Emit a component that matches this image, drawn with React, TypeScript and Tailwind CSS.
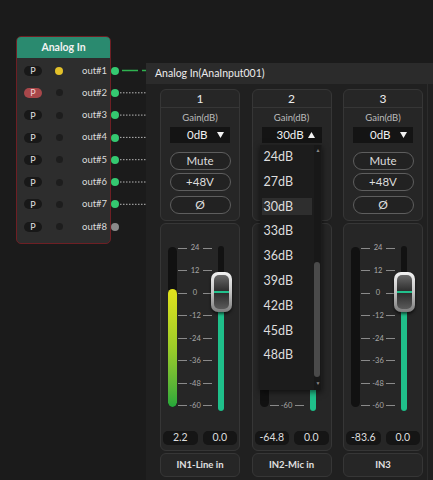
import React from 'react';

const outs = ['out#1', 'out#2', 'out#3', 'out#4', 'out#5', 'out#6', 'out#7', 'out#8'];
const scale = ['24', '12', '0', '-12', '-24', '-36', '-48', '-60'];
const gainOptions = ['24dB', '27dB', '30dB', '33dB', '36dB', '39dB', '42dB', '45dB', '48dB'];

const channels = [
  { num: '1', gain: '0dB', level: 118, peak: '2.2', out: '0.0', name: 'IN1-Line in', open: false },
  { num: '2', gain: '30dB', level: 0, peak: '-64.8', out: '0.0', name: 'IN2-Mic in', open: true },
  { num: '3', gain: '0dB', level: 0, peak: '-83.6', out: '0.0', name: 'IN3', open: false },
];

function NodeRow({ label, i }: { label: string; i: number }) {
  return (
    <div className="relative flex h-[22.3px] items-center pl-[7px]">
      <div
        className={`flex h-[10px] w-[18px] items-center justify-center rounded-full text-[9px] leading-none ${
          i === 1 ? 'bg-[#a8474a] text-[#f0d0d0]' : 'bg-[#181818] text-[#e0e0e0]'
        }`}
      >
        P
      </div>
      <div className="ml-[13px] flex w-[8px] justify-center">
        {i === 0 ? (
          <div className="h-[8px] w-[8px] rounded-full bg-[#e3c12a]" />
        ) : (
          <div className="h-[7px] w-[7px] rounded-full bg-[#1d1d1d]" />
        )}
      </div>
      <span className="ml-[19px] text-[9.5px] text-[#dcdcdc]">{label}</span>
      <div
        className={`absolute left-[94px] h-[8px] w-[8px] rounded-full ${
          i === 7 ? 'bg-[#8a8a8a]' : 'bg-[#35c870]'
        }`}
      />
    </div>
  );
}

function Connections() {
  const ys = [70.5, 92.8, 115.1, 137.4, 159.7, 182, 204.3];
  return (
    <svg className="absolute left-[118px] top-[60px]" width="30" height="160">
      {ys.map((y, i) =>
        i === 0 ? (
          <g key={i}>
            <line x1="4" y1={y - 60} x2="20" y2={y - 60} stroke="#2fb350" strokeWidth="1.5" />
            <line x1="24" y1={y - 60} x2="30" y2={y - 60} stroke="#2fb350" strokeWidth="1.5" />
          </g>
        ) : (
          <line
            key={i}
            x1="2"
            y1={y - 60}
            x2="30"
            y2={y - 60}
            stroke="#b8b8b8"
            strokeWidth="1"
            strokeDasharray="1.5 1.5"
          />
        )
      )}
    </svg>
  );
}

function Caret({ up }: { up?: boolean }) {
  return (
    <svg width="7" height="6" viewBox="0 0 7 6">
      <path d={up ? 'M0 6 L3.5 0 L7 6 Z' : 'M0 0 L7 0 L3.5 6 Z'} fill="#f2f2f2" />
    </svg>
  );
}

function Knob() {
  return (
    <div className="absolute left-[-7.5px] top-[26px] h-[40px] w-[21px] rounded-[7px] bg-gradient-to-b from-[#f2f2f2] via-[#c4c4c4] to-[#7c7c7c] p-[3px] shadow-[0_2px_3px_rgba(0,0,0,0.6)]">
      <div className="flex h-full w-full items-center rounded-[5px] bg-gradient-to-b from-[#6a6a6a] via-[#2b2b2b] to-[#5a5a5a]">
        <div className="h-[1.5px] w-full bg-[#22c08c]" />
      </div>
    </div>
  );
}

// covered: the gain list lies over the upper part of this strip
function Meter({ level, covered }: { level: number; covered: boolean }) {
  return (
    <div className="flex h-[166px] items-start">
      <div className="ml-[7px] mt-[1px] flex h-[160px] w-[9px] flex-col justify-end overflow-hidden rounded-full bg-[#111111]">
        {level > 0 && (
          <div
            className="w-full rounded-full bg-gradient-to-b from-[#e2e21c] via-[#9bcc28] to-[#22a83a]"
            style={{ height: level }}
          />
        )}
      </div>
      <div className="-mt-[3px] flex h-[168px] w-[40px] flex-col justify-between">
        {scale.map((s) => (
          <div
            key={s}
            className={`flex h-[10px] items-center pl-[1px] pr-[5px] ${covered && s !== '-60' ? 'invisible' : ''}`}
          >
            <div className="h-[1px] w-[9px] bg-[#8a8a8a]" />
            <span className="flex-1 text-center text-[7.5px] leading-none text-[#a8a8a8]">{s}</span>
            <div className="h-[1px] w-[9px] bg-[#8a8a8a]" />
          </div>
        ))}
      </div>
      <div className="relative ml-[1px] flex h-[165px] w-[6px] flex-col justify-end rounded-full bg-[#121212]">
        <div className="h-[112px] w-full rounded-full bg-[#1fbf8a]" />
        {!covered && <Knob />}
      </div>
    </div>
  );
}

function GainList() {
  return (
    <div className="absolute left-[8px] top-[56px] z-10 h-[245px] w-[62px] bg-[#1c1c1c] shadow-[0_2px_6px_rgba(0,0,0,0.6)]">
      <div className="flex flex-col pl-[2px]">
        {gainOptions.map((g) => (
          <div key={g} className="flex h-[24.8px] items-center">
            <div
              className={`flex h-[17px] w-[50px] items-center pl-[2px] text-[12.5px] text-[#dedede] ${
                g === '30dB' ? 'bg-[#2e2e2e]' : ''
              }`}
            >
              {g}
            </div>
          </div>
        ))}
      </div>
      <div className="absolute bottom-0 right-[1px] top-0 w-[7px] bg-[#181818]">
        <div className="absolute left-[2px] top-[3px] text-[5px] leading-none text-[#888]">▲</div>
        <div className="absolute left-[0.5px] top-[117px] h-[115px] w-[6px] rounded-full bg-[#4a4a4a]" />
        <div className="absolute bottom-[4px] left-[2px] text-[5px] leading-none text-[#888]">▼</div>
      </div>
    </div>
  );
}

function Strip({ ch }: { ch: (typeof channels)[number] }) {
  const btn = `h-[18px] w-[61px] rounded-full border border-[#5e5e5e] bg-[#222222] leading-none text-[#dddddd] ${
    ch.open ? 'invisible' : ''
  }`;
  return (
    <div className="relative flex w-[80px] shrink-0 flex-col gap-[2px]">
      <div className="rounded-[6px] border border-[#363636] bg-[#262626]">
        <div className="flex h-[18px] items-center justify-center border-b border-[#363636] text-[12px] text-[#ececec]">
          {ch.num}
        </div>
        <div className="flex h-[112px] flex-col items-center pt-[3px]">
          <div className="text-[9.5px] leading-[14px] text-[#bdbdbd]">Gain(dB)</div>
          <div className="mt-[2px] flex h-[16px] w-[60px] items-center bg-[#141414] text-[11.5px] text-[#f0f0f0]">
            {ch.open ? (
              <>
                <span className="pl-[15px]">{ch.gain}</span>
                <span className="ml-[4px] flex">
                  <Caret up />
                </span>
              </>
            ) : (
              <>
                <span className="pl-[17px]">{ch.gain}</span>
                <span className="ml-auto mr-[6px] flex">
                  <Caret />
                </span>
              </>
            )}
          </div>
          <button className={`mt-[9px] text-[11.5px] ${btn}`}>Mute</button>
          <button className={`mt-[3px] text-[11.5px] ${btn}`}>+48V</button>
          <button className={`mt-[5px] text-[12px] ${btn}`}>Ø</button>
        </div>
      </div>
      <div className="rounded-[6px] border border-[#363636] bg-[#262626] pb-[5px] pt-[22px]">
        <Meter level={ch.level} covered={ch.open} />
        <div className="mt-[19px] flex gap-[5px] px-[2px]">
          <div className="flex h-[14px] w-[35px] items-center justify-center rounded-[5px] bg-[#151515] text-[10.5px] text-[#dddddd]">
            {ch.peak}
          </div>
          <div className="flex h-[14px] w-[35px] items-center justify-center rounded-[5px] bg-[#151515] text-[10.5px] text-[#dddddd]">
            {ch.out}
          </div>
        </div>
      </div>
      <div className="flex h-[24px] items-center justify-center rounded-[6px] border border-[#363636] bg-[#262626] text-[9.5px] font-bold text-[#e0e0e0]">
        {ch.name}
      </div>
      {ch.open && <GainList />}
    </div>
  );
}

export default function App() {
  return (
    <div className="relative h-[480px] w-[433px] overflow-hidden bg-[#1b1b1b] font-['Lato','Noto_Sans',sans-serif]">
      {/* node on canvas */}
      <div className="absolute left-[16px] top-[36px] h-[208px] w-[95px] rounded-[5px] border border-[#6e1f24] bg-[#2d2d2d]">
        <div className="flex h-[21px] items-center justify-center rounded-t-[4px] bg-[#2a8a6f] text-[10.5px] font-bold text-[#f2f2f2]">
          Analog In
        </div>
        <div className="pt-[1.5px]">
          {outs.map((o, i) => (
            <NodeRow key={o} label={o} i={i} />
          ))}
        </div>
      </div>
      <Connections />

      {/* properties panel */}
      <div className="absolute bottom-0 left-[146px] right-0 top-[63px] bg-[#202020]">
        <div className="flex h-[21px] items-center bg-[#2b2b2b] pl-[9px] text-[10.5px] text-[#ececec]">
          Analog In(AnaInput001)
        </div>
        <div className="flex gap-[11.5px] pl-[14px] pt-[5px]">
          {channels.map((ch) => (
            <Strip key={ch.num} ch={ch} />
          ))}
        </div>
        <div className="absolute bottom-0 right-[5px] top-[21px] w-[1px] bg-[#2c2c2c]" />
      </div>
    </div>
  );
}
